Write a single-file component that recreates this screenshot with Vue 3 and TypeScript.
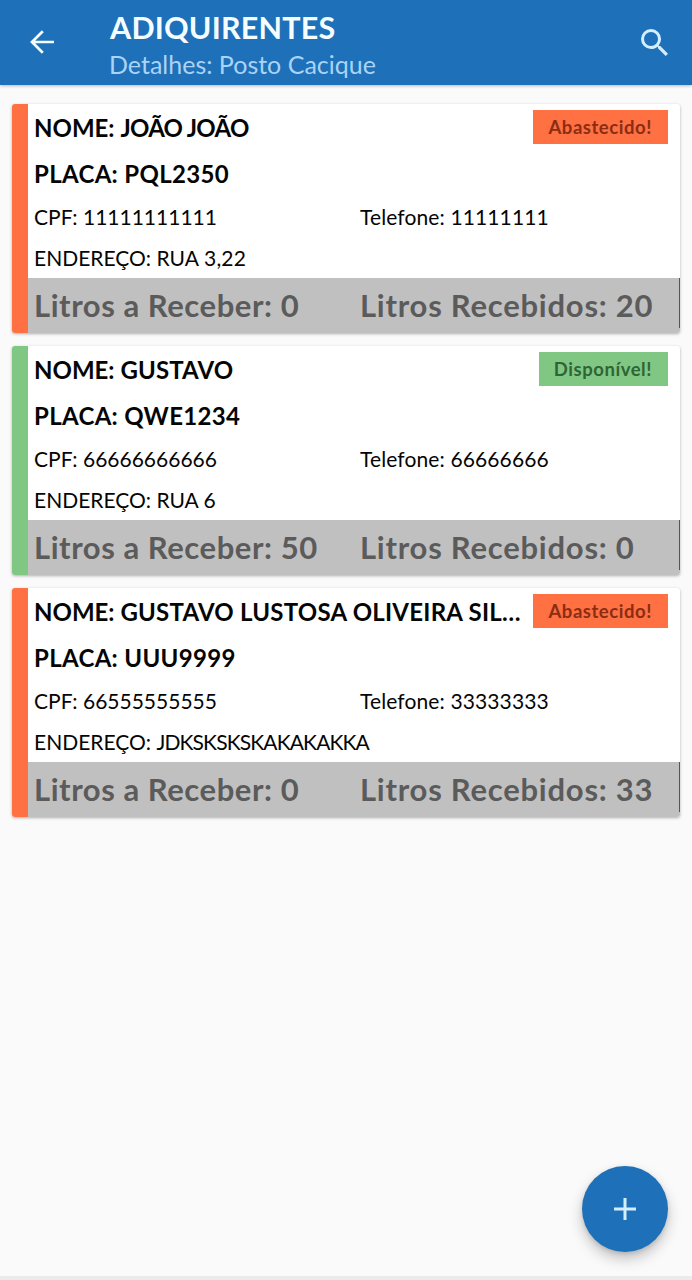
<script setup lang="ts">
interface Acquirer {
  name: string
  nameTracking: number
  plate: string
  cpf: string
  phone: string
  address: string
  addressTracking: number
  toReceive: number
  received: number
  status: 'filled' | 'available'
}

const labels = { filled: 'Abastecido!', available: 'Disponível!' }

const acquirers: Acquirer[] = [
  { name: 'JOÃO JOÃO', nameTracking: -0.7, plate: 'PQL2350', cpf: '11111111111', phone: '11111111', address: 'RUA 3,22', addressTracking: 0.15, toReceive: 0, received: 20, status: 'filled' },
  { name: 'GUSTAVO', nameTracking: 0.15, plate: 'QWE1234', cpf: '66666666666', phone: '66666666', address: 'RUA 6', addressTracking: 0, toReceive: 50, received: 0, status: 'available' },
  { name: 'GUSTAVO LUSTOSA OLIVEIRA SIL…', nameTracking: 0.24, plate: 'UUU9999', cpf: '66555555555', phone: '33333333', address: 'JDKSKSKSKAKAKAKKA', addressTracking: -0.86, toReceive: 0, received: 33, status: 'filled' },
]
</script>

<template>
  <div class="screen">
    <header class="bar">
      <button class="icon back" aria-label="Voltar">
        <svg viewBox="0 0 24 24" width="24" height="24" fill="none" stroke="#f4fdff" stroke-width="2.7">
          <path d="M24 12H2M12.8 1.2 2 12l10.8 10.8" />
        </svg>
      </button>
      <div class="titles">
        <h1>ADIQUIRENTES</h1>
        <p>Detalhes: Posto Cacique</p>
      </div>
      <button class="icon search" aria-label="Buscar">
        <svg viewBox="3 3 17.5 17.5" width="27" height="27" fill="#d3efff">
          <path d="M15.5 14h-.79l-.28-.27A6.47 6.47 0 0 0 16 9.5 6.5 6.5 0 1 0 9.5 16c1.61 0 3.09-.59 4.23-1.57l.27.28v.79l5 4.99L20.49 19l-4.99-5zm-6 0C7.01 14 5 11.99 5 9.5S7.01 5 9.5 5 14 7.01 14 9.5 11.99 14 9.5 14z" />
        </svg>
      </button>
    </header>

    <main class="list">
      <article v-for="a in acquirers" :key="a.cpf" class="card" :class="a.status">
        <div class="body">
          <div class="top">
            <h2>NOME: <span :style="{ letterSpacing: a.nameTracking + 'px' }">{{ a.name }}</span></h2>
            <span class="badge">{{ labels[a.status] }}</span>
          </div>
          <h2 class="plate">PLACA: {{ a.plate }}</h2>
          <div class="pair info">
            <span>CPF: {{ a.cpf }}</span>
            <span class="phone">Telefone: {{ a.phone }}</span>
          </div>
          <div class="info address">ENDEREÇO: <span :style="{ letterSpacing: a.addressTracking + 'px' }">{{ a.address }}</span></div>
          <div class="pair totals">
            <span>Litros a Receber: {{ a.toReceive }}</span>
            <span class="received">Litros Recebidos: {{ a.received }}</span>
          </div>
        </div>
      </article>
    </main>

    <button class="fab" aria-label="Adicionar">
      <svg viewBox="0 0 22 22" width="22" height="22" stroke="#d3efff" stroke-width="3">
        <path d="M11 0v22M0 11h22" />
      </svg>
    </button>
    <div class="nav-edge"></div>
  </div>
</template>

<style>
body {
  margin: 0;
}
</style>

<style scoped>
.screen {
  position: relative;
  height: 1280px;
  overflow: hidden;
  background: #fafafa;
  color: #050505;
  font-family: Lato, "Open Sans", sans-serif;
}
h1, h2, p {
  margin: 0;
  white-space: nowrap;
}
button {
  border: 0;
  padding: 0;
  background: none;
}
svg {
  display: block;
}
.bar {
  display: flex;
  align-items: center;
  box-sizing: border-box;
  height: 85px;
  padding: 0 24px 1px 30px;
  background: #1e70b8;
  box-shadow: 0 1px 3px rgba(0, 0, 0, 0.25);
}
.titles {
  flex: 1;
  align-self: flex-start;
  margin-left: 56px;
}
h1 {
  margin-top: 7px;
  color: #f4fdff;
  font-size: 30.5px;
  font-weight: 700;
  line-height: 40px;
  letter-spacing: 0.2px;
}
.titles p {
  margin-left: -1px;
  color: #a9d3f7;
  font-size: 25px;
  line-height: 34px;
}
.list {
  display: flex;
  flex-direction: column;
  gap: 13px;
  padding: 19px 12px 0;
}
.card {
  height: 229px;
  display: flex;
  border-radius: 3px;
  overflow: hidden;
  background: #fff;
  box-shadow: 0 1px 3px rgba(0, 0, 0, 0.3);
}
.card::before {
  content: "";
  width: 16px;
  background: #ff7043;
}
.available::before {
  background: #81c784;
}
.body {
  flex: 1;
}
.top {
  display: flex;
  justify-content: space-between;
  height: 47px;
  padding: 0 12px 0 6px;
}
h2 {
  font-size: 24px;
  font-weight: 700;
  line-height: 48px;
}
.plate {
  height: 46px;
  padding-left: 6px;
  line-height: 46px;
  letter-spacing: 0.32px;
}
.badge {
  height: 34px;
  margin-top: 6px;
  padding: 0 16px 0 15px;
  background: #ff7043;
  color: #8b2d13;
  font-size: 18.5px;
  font-weight: 700;
  line-height: 35px;
  letter-spacing: 0.55px;
}
.available .badge {
  background: #81c784;
  color: #2f6534;
}
.pair {
  display: grid;
  grid-template-columns: 326px 1fr;
  padding-left: 6px;
}
.info {
  height: 41px;
  font-size: 21px;
  line-height: 40px;
}
.phone {
  letter-spacing: 0.12px;
}
.address {
  height: 40.4px;
  padding-left: 6px;
}
.totals {
  height: 55px;
  background: linear-gradient(#555, #555) right top / 1px 50px no-repeat #c0c0c0;
  color: #5b5b5b;
  font-size: 31px;
  font-weight: 700;
  line-height: 55px;
  letter-spacing: 0.55px;
}
.received {
  letter-spacing: 0.75px;
}
.fab {
  position: absolute;
  right: 24px;
  bottom: 28px;
  display: grid;
  place-items: center;
  width: 86px;
  height: 86px;
  border-radius: 50%;
  background: #1e70b8;
  box-shadow: 0 7px 14px rgba(0, 0, 0, 0.22), 0 2px 4px rgba(0, 0, 0, 0.12);
}
.nav-edge {
  position: absolute;
  inset: auto 0 0;
  height: 4px;
  background: #ebebeb;
}
</style>
